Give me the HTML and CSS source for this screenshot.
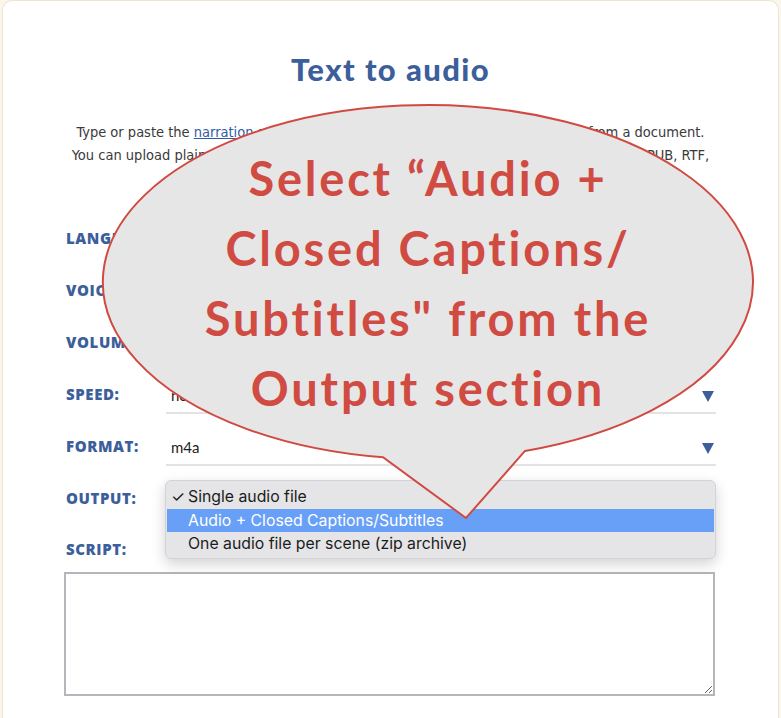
FILE: index.html
```html
<!DOCTYPE html>
<html lang="en">
<head>
<meta charset="utf-8">
<title>Text to audio</title>
<link rel="stylesheet" href="styles.css">
</head>
<body>
<div class="card">
  <h1 class="title">Text to audio</h1>
  <p class="intro"><span class="line">Type or paste the <a href="#" class="link">narration</a> script into the box below, or import the script text from a document.</span><span class="line">You can upload plain text files, Microsoft Word, Microsoft PowerPoint, OpenOffice, PDF, EPUB, RTF,</span><span class="line">Markdown or HTML files.</span></p>

  <div class="form">
    <div class="row">
      <div class="label">LANGUAGE:</div>
      <div class="field"><span class="value">English (US)</span><span class="caret"></span></div>
    </div>
    <div class="row">
      <div class="label">VOICE:</div>
      <div class="field"><span class="value">Joanna</span><span class="caret"></span></div>
    </div>
    <div class="row">
      <div class="label">VOLUME:</div>
      <div class="field"><span class="value">normal</span><span class="caret"></span></div>
    </div>
    <div class="row">
      <div class="label">SPEED:</div>
      <div class="field"><span class="value">normal</span><span class="caret"></span></div>
    </div>
    <div class="row">
      <div class="label">FORMAT:</div>
      <div class="field"><span class="value">m4a</span><span class="caret"></span></div>
    </div>
    <div class="row">
      <div class="label">OUTPUT:</div>
      <div class="field field-open">
        <span class="value">Single audio file</span><span class="caret"></span>
        <ul class="menu">
          <li class="opt"><span class="check">✓</span>Single audio file</li>
          <li class="opt opt-hl">Audio + Closed Captions/Subtitles</li>
          <li class="opt">One audio file per scene (zip archive)</li>
        </ul>
      </div>
    </div>
    <div class="label script-label">SCRIPT:</div>
    <textarea class="script"></textarea>
  </div>
</div>

<div class="callout">
  <svg class="bubble" width="781" height="718" viewBox="0 0 781 718">
    <path d="M 383 457.3 A 325 177 0 1 1 525 450.9 L 466 518 Z" fill="#e6e6e7" stroke="#d04a41" stroke-width="2" stroke-linejoin="miter"/>
  </svg>
  <div class="callout-text">Select “Audio +<br>Closed Captions/<br>Subtitles" from the<br>Output section</div>
</div>
</body>
</html>
```
FILE: styles.css
```css
html, body {
  margin: 0;
  padding: 0;
}
body {
  background: #faf6ec;
  width: 781px;
  height: 718px;
  overflow: hidden;
  position: relative;
  font-family: Lato, "Open Sans", sans-serif;
}
.card {
  margin: 0 2px;
  background: #ffffff;
  border: 1px solid #efe5cc;
  border-bottom: none;
  border-radius: 10px 10px 0 0;
  padding: 50px 62px 0 62px;
  height: 720px;
  box-sizing: border-box;
}
.title {
  margin: 0;
  text-align: center;
  font-family: Lato, sans-serif;
  font-weight: 900;
  font-size: 31px;
  letter-spacing: 1.4px;
  line-height: 36px;
  color: #3c5f9b;
}
.intro {
  margin: 34px 0 0 0;
  text-align: center;
  font-family: "DejaVu Sans Condensed", "Liberation Sans Narrow", sans-serif;
  font-size: 14.5px;
  line-height: 23px;
  color: #3a3a3a;
}
.line {
  display: block;
  white-space: nowrap;
  margin: 0 -40px;
}
.link {
  color: #2f5ca6;
  text-decoration: underline;
}
.form {
  margin-top: 31px;
}
.row {
  display: flex;
  align-items: flex-start;
  margin-bottom: 15px;
}
.label {
  width: 100px;
  flex: none;
  font-family: "Open Sans", sans-serif;
  font-weight: 800;
  font-size: 15px;
  letter-spacing: 0.6px;
  line-height: 35px;
  color: #3c5f9b;
  padding-left: 1px;
}
.field {
  position: relative;
  flex: 1;
  height: 35px;
  border-bottom: 2px solid #e3e3e3;
  display: flex;
  align-items: center;
  justify-content: space-between;
  padding-left: 5px;
  padding-right: 2px;
}
.value {
  font-family: Lato, sans-serif;
  font-size: 15px;
  color: #222;
}
.caret {
  width: 0;
  height: 0;
  border-left: 6px solid transparent;
  border-right: 6px solid transparent;
  border-top: 11px solid #3c5f9b;
  margin-top: 4px;
}
.menu {
  position: absolute;
  left: -1px;
  top: -1px;
  width: 551px;
  margin: 0;
  padding: 4px 0 2px 0;
  list-style: none;
  background: #e5e5e7;
  border: 1px solid #d3d3d6;
  border-radius: 6px;
  box-shadow: 0 5px 14px rgba(0, 0, 0, 0.18);
  box-sizing: border-box;
  z-index: 5;
}
.opt {
  position: relative;
  height: 23.5px;
  line-height: 23.5px;
  padding-left: 22px;
  font-family: Inter, Roboto, sans-serif;
  font-size: 15.8px;
  color: #1c1c1c;
  white-space: nowrap;
}
.opt-hl {
  background: #69a0f7;
  color: #ffffff;
  margin: 0 1px;
  padding-left: 21px;
}
.check {
  position: absolute;
  left: 5px;
  top: 0;
}
.script-label {
  line-height: 20px;
  margin-top: 21px;
}
.script {
  display: block;
  width: 651px;
  height: 124px;
  margin: 13px 0 0 -1px;
  border: 2px solid #b3b7bb;
  border-radius: 0;
  box-sizing: border-box;
  background: #fff;
  resize: both;
  font-family: Lato, sans-serif;
}
.callout {
  position: absolute;
  left: 0;
  top: 0;
  width: 781px;
  height: 718px;
  pointer-events: none;
  z-index: 10;
}
.bubble {
  position: absolute;
  left: 0;
  top: 0;
}
.callout-text {
  position: absolute;
  left: 128px;
  top: 143px;
  width: 600px;
  text-align: center;
  font-family: Lato, sans-serif;
  font-weight: 700;
  font-size: 47px;
  letter-spacing: 2.8px;
  line-height: 70px;
  color: #d04b42;
}
```
